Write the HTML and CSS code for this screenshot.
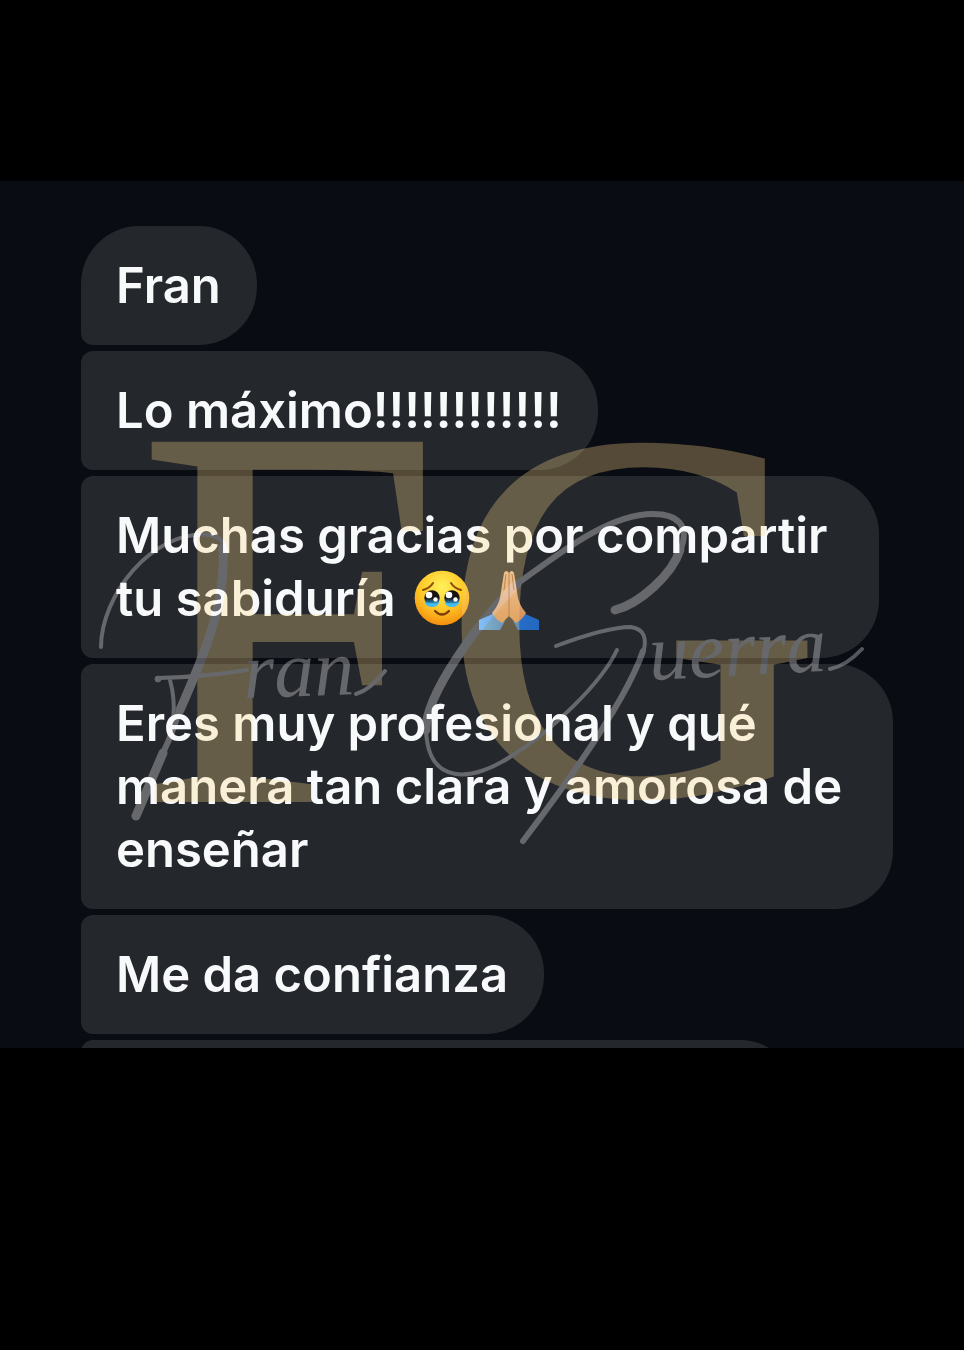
FILE: index.html
```html
<!DOCTYPE html>
<html lang="es">
<head>
<meta charset="utf-8">
<meta name="viewport" content="width=device-width, initial-scale=1">
<title>Fran Guerra</title>
<link rel="stylesheet" href="styles.css">
</head>
<body>
<main class="chat">
  <div class="messages">
    <p class="bubble first">Fran</p>
    <p class="bubble">Lo máximo!!!!!!!!!!!!</p>
    <p class="bubble medium">Muchas gracias por compartir tu sabiduría
      <svg class="emoji face" viewBox="0 0 56 56" role="img" aria-label="🥹">
        <defs>
          <radialGradient id="skin" cx=".5" cy=".3" r=".72"><stop offset="0" stop-color="#fff15c"/><stop offset=".55" stop-color="#ffc928"/><stop offset="1" stop-color="#f48b0c"/></radialGradient>
          <linearGradient id="eye" x1="0" y1="0" x2="0" y2="1"><stop offset=".5" stop-color="#171214"/><stop offset=".8" stop-color="#287fae"/><stop offset="1" stop-color="#58ccfa"/></linearGradient>
        </defs>
        <circle cx="28" cy="28" r="27.3" fill="url(#skin)"/>
        <path d="M9 20Q16 18 19 13M47 20Q40 18 37 13" fill="none" stroke="#8a4b0c" stroke-width="2" stroke-linecap="round"/>
        <circle cx="18" cy="28" r="7.7" fill="url(#eye)"/><circle cx="38" cy="28" r="7.7" fill="url(#eye)"/>
        <path d="M10.500 32Q18 35 25.500 32Q24 37 18 37T10.500 32M30.500 32Q38 35 45.500 32Q44 37 38 37T30.500 32" fill="#45bdf1"/>
        <g fill="#fff"><circle cx="15" cy="25" r="3.300"/><circle cx="21.500" cy="29.500" r="2.200"/><circle cx="35" cy="25" r="3.300"/><circle cx="41.500" cy="29.500" r="2.200"/></g>
        <path d="M21 41Q28 48 35 41" fill="none" stroke="#7c3e08" stroke-width="2.200" stroke-linecap="round"/>
      </svg>
      <svg class="emoji hands" viewBox="0 0 62 60" role="img" aria-label="🙏🏼">
        <defs>
          <linearGradient id="sleeve" x1="0" y1="0" x2="1" y2="0"><stop offset="0" stop-color="#4fa6f2"/><stop offset=".5" stop-color="#2670cc"/><stop offset="1" stop-color="#2468c0"/></linearGradient>
          <linearGradient id="palm" x1="0" y1="0" x2="0" y2="1"><stop offset="0" stop-color="#e9b991"/><stop offset="1" stop-color="#d38c53"/></linearGradient>
        </defs>
        <path d="M1 50L17 43L27 51L22 60H1ZM61 50L45 43L35 51L40 60H61Z" fill="url(#sleeve)"/>
        <path d="M31 3Q28-1 26 3L22 28Q20 36 14 43Q18 50 24 53L31 46L38 53Q44 50 48 43Q42 36 40 28L36 3Q34-1 31 3Z" fill="url(#palm)"/>
        <path d="M31 3V47M28 4L26 20M34 4L36 20" fill="none" stroke="#9c613b" stroke-width="1"/>
      </svg></p>
    <p class="bubble wide">Eres muy profesional y qué manera tan clara y amorosa de enseñar</p>
    <p class="bubble">Me da confianza</p>
    <div class="next"></div>
  </div>
  <svg class="watermark" viewBox="0 181 964 867" role="img" aria-label="FG Fran Guerra">
    <g class="monogram">
      <text class="initial-f" x="138" y="800">F</text>
      <text class="initial-g" x="442" y="793">G</text>
    </g>
    <g class="flourish">
      <path class="thin" d="M101 647C101 597 151 529 210 535Q227 538 226 557"/>
      <path class="thick" d="M223 548C226 602 206 651 180 710"/>
      <path class="thin" d="M158 678Q205 677 247 670M170 680C178 709 173 732 163 753"/>
      <circle cx="158" cy="679" r="3"/>
      <path class="mid" d="M180 708Q174 730 163 753"/>
      <path class="thick" d="M163 753L136 816"/>
      <path class="thick" d="M615 610C639 604 672 575 680 550"/>
      <path class="mid" d="M680 551C691 525 677 514 653 514C609 514 561 552 517 584"/>
      <path class="thick" d="M517 584C477 623 425 696 426 730"/>
      <path class="thin" d="M426 728C427 786 472 783 513 755C550 732 601 684 617 650"/>
      <path class="thin" d="M556 646C580 637 609 627 631 627Q650 630 643 653"/>
      <path class="mid" d="M643 651C627 699 567 783 523 841"/>
      <path class="thin" d="M356 694Q370 690 385 671M830 669Q846 666 862 649"/>
    </g>
    <g class="signature">
      <text x="244" y="698" transform="rotate(-2 244 698)">ran</text>
      <text x="650" y="680" transform="rotate(-3 650 680)">uerra</text>
    </g>
  </svg>
</main>
</body>
</html>
```
FILE: styles.css
```css
* { box-sizing: border-box; }

body {
  margin: 0;
  min-height: 100vh;
  padding: 181px 0 302px;
  background: #000;
  font-family: Inter, "Liberation Sans", sans-serif;
}

.chat {
  position: relative;
  overflow: hidden;
  padding: 45px 24px 0 81px;
  background: #0a0c14;
}

.messages {
  display: flex;
  flex-direction: column;
  align-items: flex-start;
  gap: 6px;
}

.bubble {
  margin: 0;
  padding: 28px 36px 28px 35px;
  border-radius: 12px 58px 58px 12px;
  background: #24272c;
  color: #f8f9fa;
  font-size: 49px;
  font-weight: 600;
  line-height: 63px;
}

.first { border-top-left-radius: 58px; }
.medium { max-width: 798px; }
.wide { max-width: 812px; }

.next {
  width: 100%;
  max-width: 717px;
  height: 8px;
  overflow: hidden;
}

.next::before {
  content: "";
  display: block;
  height: 119px;
  border-radius: 12px 58px 58px 12px;
  background: #24272c;
}

.emoji { display: inline-block; }
.face { width: 56px; height: 56px; margin-left: 6px; vertical-align: -10px; }
.hands { width: 62px; height: 60px; margin: -2px 0 -2px -4px; vertical-align: -12px; }

.watermark {
  position: absolute;
  inset: 0;
  width: 100%;
  height: 100%;
  opacity: 0.3;
  pointer-events: none;
}

.monogram {
  fill: #ffda88;
  font-family: "Liberation Serif", serif;
  stroke: #ffda88;
  stroke-width: 4px;
}

.initial-f { font-size: 544px; }
.initial-g { font-size: 526px; }

.flourish {
  fill: #fff;
  stroke: #fff;
  stroke-linecap: round;
}

.flourish path { fill: none; }
.thin { stroke-width: 4px; }
.mid { stroke-width: 6px; }
.thick { stroke-width: 9px; }

.signature {
  fill: #fff;
  font-family: "Liberation Serif", serif;
  font-size: 80px;
  font-style: italic;
}
```
